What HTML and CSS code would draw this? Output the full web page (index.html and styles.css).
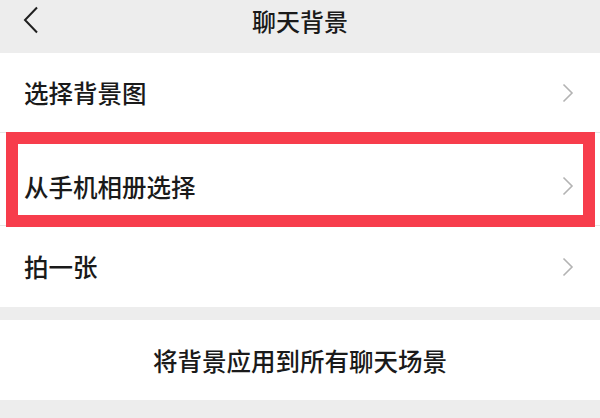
FILE: index.html
```html
<!DOCTYPE html>
<html lang="zh-CN">
<head>
<meta charset="utf-8">
<link rel="stylesheet" href="styles.css">
</head>
<body>
<div class="page">
  <header class="header">
    <div class="back">
      <svg width="16" height="28" viewBox="0 0 16 28"><path d="M14 1.5 L2 14 L14 26.5" fill="none" stroke="#1f1f1f" stroke-width="2"/></svg>
    </div>
    <div class="title">聊天背景</div>
    <div></div>
  </header>
  <section class="list">
    <div class="row row-first"><span>选择背景图</span><svg class="chev" width="12" height="20" viewBox="0 0 12 20"><path d="M1.5 1.5 L10 10 L1.5 18.5" fill="none" stroke="#b3b3b3" stroke-width="1.6"/></svg></div>
    <div class="row row-second"><span>从手机相册选择</span><svg class="chev" width="12" height="20" viewBox="0 0 12 20"><path d="M1.5 1.5 L10 10 L1.5 18.5" fill="none" stroke="#b3b3b3" stroke-width="1.6"/></svg></div>
    <div class="row row-third"><span>拍一张</span><svg class="chev" width="12" height="20" viewBox="0 0 12 20"><path d="M1.5 1.5 L10 10 L1.5 18.5" fill="none" stroke="#b3b3b3" stroke-width="1.6"/></svg></div>
  </section>
  <section class="apply">将背景应用到所有聊天场景</section>
  <div class="highlight"></div>
</div>
</body>
</html>
```

FILE: styles.css
```css
html, body {
  margin: 0;
  padding: 0;
}
body {
  background: #ededed;
  font-family: "Noto Sans CJK SC", "Noto Sans", sans-serif;
  color: #1a1a1a;
}
.page {
  position: relative;
  width: 600px;
  height: 418px;
  overflow: hidden;
}
.header {
  height: 53px;
  display: grid;
  grid-template-columns: 1fr auto 1fr;
  align-items: start;
  background: #ededed;
}
.back {
  padding: 6px 0 0 23px;
  height: 28px;
}
.back svg {
  display: block;
}
.title {
  font-size: 24px;
  line-height: 42px;
  font-weight: 500;
  color: #1a1a1a;
}
.list {
  background: #ffffff;
}
.row {
  display: flex;
  justify-content: space-between;
  align-items: center;
  padding: 0 26px 0 24px;
  font-size: 24.5px;
  font-weight: 500;
  box-sizing: border-box;
}
.row-first {
  height: 80px;
  border-bottom: 1px solid #e6e6e6;
}
.row-second {
  height: 93px;
  padding-top: 14px;
  border-bottom: 1px solid #e6e6e6;
}
.row-third {
  height: 81px;
}
.chev {
  display: block;
}
.apply {
  margin-top: 13px;
  height: 80px;
  background: #ffffff;
  display: flex;
  align-items: center;
  justify-content: center;
  font-size: 24.5px;
  font-weight: 500;
}
.highlight {
  position: absolute;
  left: 6px;
  top: 132px;
  width: 589px;
  height: 95px;
  box-sizing: border-box;
  border: 12px solid #f73d4c;
}
```
